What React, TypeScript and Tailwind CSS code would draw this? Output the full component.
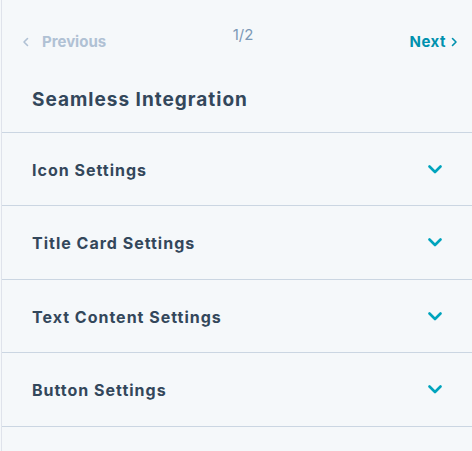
import React from "react";

const Chevron = () => (
  <svg width="14" height="9" viewBox="0 0 14 9" fill="none">
    <path d="M1.5 1.5 L7 7 L12.5 1.5" stroke="#00a4bd" strokeWidth="2.6" strokeLinecap="round" strokeLinejoin="round" />
  </svg>
);

const rows = [
  { t: "Icon Settings", h: "h-[73px]" },
  { t: "Title Card Settings", h: "h-[74px]" },
  { t: "Text Content Settings", h: "h-[73px]" },
  { t: "Button Settings", h: "h-[74px]" },
];

export default function App() {
  return (
    <div className="w-[472px] h-[451px] bg-[#f5f8fa] overflow-hidden" style={{ fontFamily: "Inter, 'Noto Sans', sans-serif" }}>
      <div className="ml-px h-full border-l border-[#dfe3eb]">
        <div className="h-[133px] border-b border-[#cbd6e2]">
          <div className="flex items-start pl-[20px] pr-[14px] pt-[31px]">
            <div className="flex flex-1 items-center gap-[12px] text-[15px] font-bold text-[#b0c1d4] leading-[22px]">
              <svg width="8" height="10" viewBox="0 0 8 10" fill="none">
                <path d="M5.5 1.5 L2 5 L5.5 8.5" stroke="#b0c1d4" strokeWidth="1.6" strokeLinecap="round" strokeLinejoin="round" />
              </svg>
              <span>Previous</span>
            </div>
            <div className="ml-[6px] text-[15px] text-[#7c98b6] leading-[22px] -mt-[7px]">1/2</div>
            <div className="flex flex-1 items-center justify-end gap-[4px] text-[15px] font-bold tracking-[0.5px] text-[#0091ae] leading-[22px]">
              <span>Next</span>
              <svg width="8" height="10" viewBox="0 0 8 10" fill="none">
                <path d="M2.5 1.5 L6 5 L2.5 8.5" stroke="#0091ae" strokeWidth="1.6" strokeLinecap="round" strokeLinejoin="round" />
              </svg>
            </div>
          </div>
          <div className="pl-[30px] pt-[33px] text-[19px] font-bold tracking-[1px] text-[#33475b] leading-[28px]">Seamless Integration</div>
        </div>
        {rows.map((r) => (
          <div key={r.t} className={`flex ${r.h} items-center justify-between border-b border-[#cbd6e2] pl-[30px] pr-[30px]`}>
            <span className="text-[16px] font-bold tracking-[1px] text-[#33475b] pt-[1px]">{r.t}</span>
            <Chevron />
          </div>
        ))}
      </div>
    </div>
  );
}
